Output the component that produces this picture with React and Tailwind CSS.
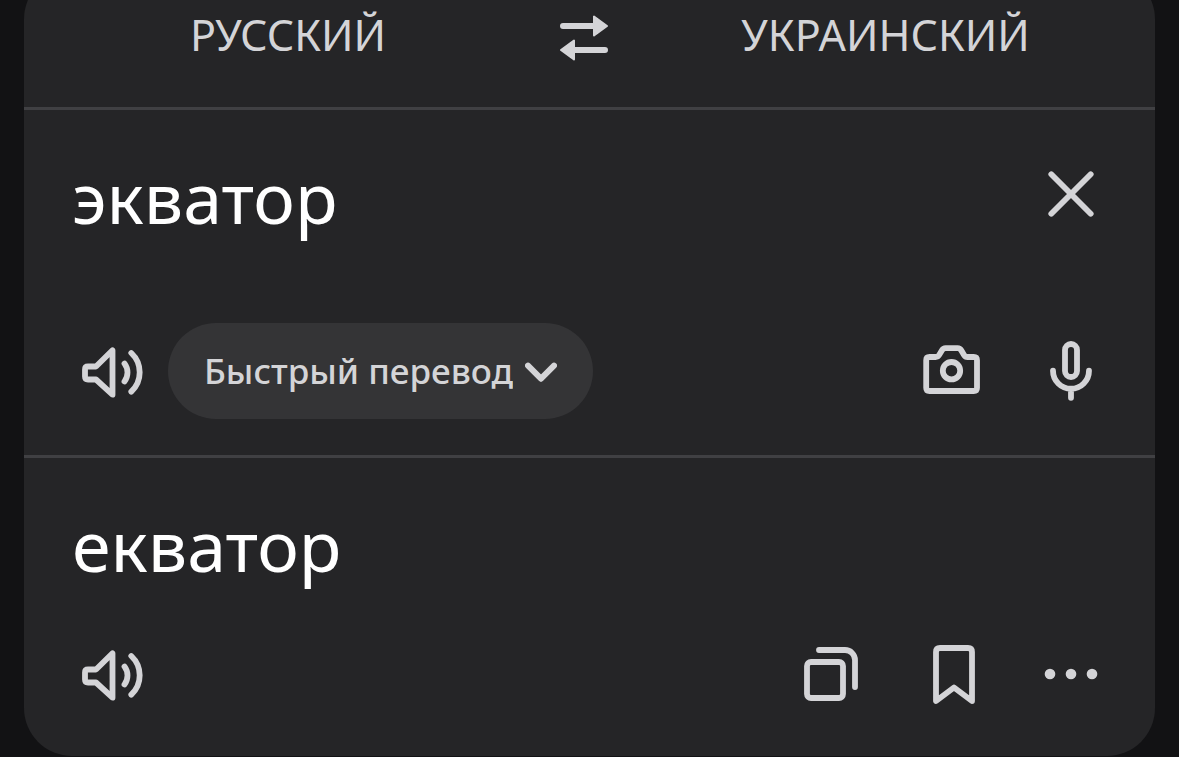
import { useState } from 'react'

const MODES = ['Быстрый перевод', 'Точный перевод']

// Shared frame for all toolbar icons
function Icon({ children }) {
  return (
    <svg
      viewBox="0 0 72 72"
      className="block size-[72px]"
      fill="none"
      stroke="currentColor"
      strokeWidth="5.8"
      strokeLinecap="round"
      strokeLinejoin="round"
      aria-hidden="true"
    >
      {children}
    </svg>
  )
}

function IconButton({ label, onClick, children }) {
  return (
    <button type="button" aria-label={label} onClick={onClick} className="shrink-0 rounded-2xl hover:text-white">
      <Icon>{children}</Icon>
    </button>
  )
}

function SpeakerButton() {
  return (
    <IconButton label="Прослушать">
      <path d="M16 31.5h8L40.5 15.3v44.4L24 44.5h-8q-3 0-3-3v-7q0-3 3-3z" />
      <path d="M52.5 28.5a15 15 0 0 1 0 18" />
      <path d="M59.3 18a26.5 26.5 0 0 1 0 38.7" />
    </IconButton>
  )
}

export default function App() {
  const [text, setText] = useState('экватор')
  const [mode, setMode] = useState(MODES[0])

  return (
    <div className="min-h-screen overflow-hidden bg-[#121214] px-6 font-['Noto_Sans',sans-serif] text-[#d4d4d7]">
      <main className="-mt-[29px] rounded-[48px] bg-[#252527]">
        {/* Languages */}
        <header className="grid h-[139px] grid-cols-[49fr_auto_50fr] items-center border-b-3 border-[#404043]">
          <button type="button" className="pb-2 text-[43px] uppercase leading-[56px]">Русский</button>
          <button type="button" aria-label="Поменять языки местами" className="px-2">
            <svg viewBox="0 0 48 48" className="block size-12" fill="none" stroke="currentColor" strokeLinecap="round" strokeLinejoin="round" aria-hidden="true">
              <path d="M3 11h32M45 35H13" strokeWidth="6" />
              <path d="M34 1.5v19L47 11zM14 25.5v19L1 35z" fill="currentColor" strokeWidth="2" />
            </svg>
          </button>
          <button type="button" className="pb-2 text-[43px] uppercase leading-[56px]">Украинский</button>
        </header>

        {/* Source text */}
        <section className="border-b-3 border-[#404043] px-12 pt-[39px] pb-9">
          <div className="flex items-center">
            <input
              type="text"
              aria-label="Текст для перевода"
              value={text}
              onChange={(e) => setText(e.target.value)}
              className="h-24 min-w-0 flex-1 bg-transparent text-[70px] leading-[96px] text-white outline-none"
            />
            <IconButton label="Очистить" onClick={() => setText('')}>
              <path d="M16.3 13.3l39.4 39.4M55.7 13.3L16.3 52.7" />
            </IconButton>
          </div>
          <div className="mt-[78px] flex items-center gap-6">
            <SpeakerButton />
            <div className="relative">
              <select
                aria-label="Режим перевода"
                value={mode}
                onChange={(e) => setMode(e.target.value)}
                className="block h-24 appearance-none rounded-full bg-[#343436] pr-20 pl-9 text-[35px] font-medium outline-none"
              >
                {MODES.map((m) => (
                  <option key={m}>{m}</option>
                ))}
              </select>
              <svg
                viewBox="0 0 32 20"
                className="pointer-events-none absolute top-[39px] right-9 h-5 w-8"
                fill="none"
                stroke="currentColor"
                strokeWidth="6"
                strokeLinecap="round"
                strokeLinejoin="round"
                aria-hidden="true"
              >
                <path d="M3 3.7l13 13 13-13" />
              </svg>
            </div>
            <div className="ml-auto flex gap-12">
              <IconButton label="Перевести с фото">
                <path d="M14.5 22h6q2.5 0 3.7-2.1l2.8-4.7q1.2-2.1 3.6-2.1h12q2.4 0 3.6 2.1l2.8 4.7q1.2 2.1 3.7 2.1h6q3.3 0 3.3 3.3v27.4q0 3.300-3.300 3.300h-44.200q-3.300 0-3.300-3.300v-27.400q0-3.300 3.300-3.300z" />
                <circle cx="36.5" cy="35.7" r="8.7" />
              </IconButton>
              <IconButton label="Голосовой ввод">
                <rect x="30" y="9" width="12" height="33" rx="6" />
                <path d="M18 35.7a18 18 0 0 0 36 0M36 54v8.8" />
              </IconButton>
            </div>
          </div>
        </section>

        {/* Translation */}
        <section className="px-12 pt-12 pb-[46px]">
          <p lang="uk" className="text-[70px] leading-[78px] text-white">екватор</p>
          <div className="mt-[54px] flex items-center justify-between">
            <SpeakerButton />
            <div className="flex gap-12">
              <IconButton label="Скопировать">
                <rect x="12" y="24" width="36" height="36" rx="4" />
                <path d="M24 12h26a10 10 0 0 1 10 10v27" />
              </IconButton>
              <IconButton label="В избранное">
                <path d="M21 63V14q0-4 4-4h28q4 0 4 4v49L39 49.5z" />
              </IconButton>
              <IconButton label="Ещё">
                <g fill="currentColor" stroke="none">
                  <circle cx="15" cy="36" r="5.3" />
                  <circle cx="36" cy="36" r="5.3" />
                  <circle cx="57" cy="36" r="5.3" />
                </g>
              </IconButton>
            </div>
          </div>
        </section>
      </main>
    </div>
  )
}
